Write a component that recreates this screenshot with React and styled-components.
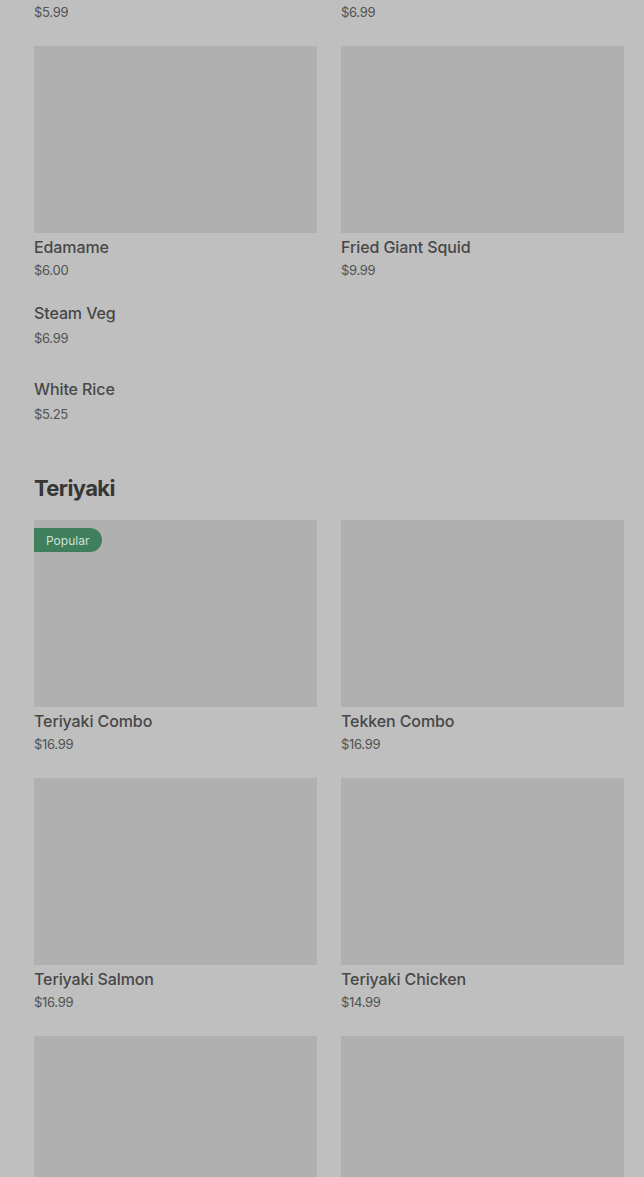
import styled, { createGlobalStyle } from 'styled-components';

const GlobalStyle = createGlobalStyle`
  html, body {
    margin: 0;
    padding: 0;
    background: #bfbfbf;
  }
  body {
    font-family: Inter, "Noto Sans", sans-serif;
    -webkit-font-smoothing: antialiased;
  }
`;

const Page = styled.div`
  padding: 2px 20px 0 34px;
  overflow: hidden;
  height: 1177px;
  box-sizing: border-box;
`;

const Grid = styled.ul`
  list-style: none;
  margin: 0;
  padding: 0;
  display: grid;
  grid-template-columns: 283px 283px;
  column-gap: 24px;
  row-gap: 24px;
`;

const Card = styled.li`
  display: flex;
  flex-direction: column;
`;

const Thumb = styled.div`
  position: relative;
  height: 187px;
  background: #b0b0b0;
  margin-bottom: 2px;
`;

const Badge = styled.span`
  position: absolute;
  top: 8px;
  left: 0;
  height: 24px;
  padding: 0 12px 0 12px;
  width: 44px;
  display: flex;
  align-items: center;
  background: #3f7f5e;
  color: #cfe0d7;
  font-size: 12px;
  border-radius: 0 12px 12px 0;
`;

const Name = styled.p`
  margin: 0;
  font-size: 16px;
  font-weight: 500;
  line-height: 24px;
  color: #474747;
  letter-spacing: -0.1px;
`;

const Price = styled.p`
  margin: ${(p) => (p.$spaced ? '3px' : '1px')} 0 0;
  font-size: 13px;
  line-height: 20px;
  color: #525252;
  letter-spacing: -0.3px;
`;

const TailPrice = styled(Price)`
  margin: 0;
`;

const PlainList = styled.ul`
  list-style: none;
  margin: 0;
  padding: 0;
`;

const PlainItem = styled.li`
  height: 76px;
  padding-top: 21px;
  box-sizing: border-box;
`;

const SectionTitle = styled.h2`
  margin: 42px 0 18px;
  font-size: 22px;
  line-height: 28px;
  font-weight: 700;
  color: #363636;
  letter-spacing: -0.6px;
`;

const sides = [
  { name: 'Edamame', price: '$6.00' },
  { name: 'Fried Giant Squid', price: '$9.99' },
];

const plain = [
  { name: 'Steam Veg', price: '$6.99' },
  { name: 'White Rice', price: '$5.25' },
];

// last two only show their pictures above the fold
const teriyaki = [
  { id: 1, name: 'Teriyaki Combo', price: '$16.99', popular: true },
  { id: 2, name: 'Tekken Combo', price: '$16.99' },
  { id: 3, name: 'Teriyaki Salmon', price: '$16.99' },
  { id: 4, name: 'Teriyaki Chicken', price: '$14.99' },
  { id: 5 },
  { id: 6 },
];

const MenuCard = ({ name, price, popular }) => (
  <Card>
    <Thumb>{popular && <Badge>Popular</Badge>}</Thumb>
    {name && <Name>{name}</Name>}
    {price && <Price>{price}</Price>}
  </Card>
);

export default function App() {
  return (
    <>
      <GlobalStyle />
      <Page>
        <Grid>
          <Card>
            <TailPrice>$5.99</TailPrice>
          </Card>
          <Card>
            <TailPrice>$6.99</TailPrice>
          </Card>
          {sides.map((item) => (
            <MenuCard key={item.name} {...item} />
          ))}
        </Grid>
        <PlainList>
          {plain.map((item) => (
            <PlainItem key={item.name}>
              <Name>{item.name}</Name>
              <Price $spaced>{item.price}</Price>
            </PlainItem>
          ))}
        </PlainList>
        <SectionTitle>Teriyaki</SectionTitle>
        <Grid>
          {teriyaki.map((item) => (
            <MenuCard key={item.id} {...item} />
          ))}
        </Grid>
      </Page>
    </>
  );
}
